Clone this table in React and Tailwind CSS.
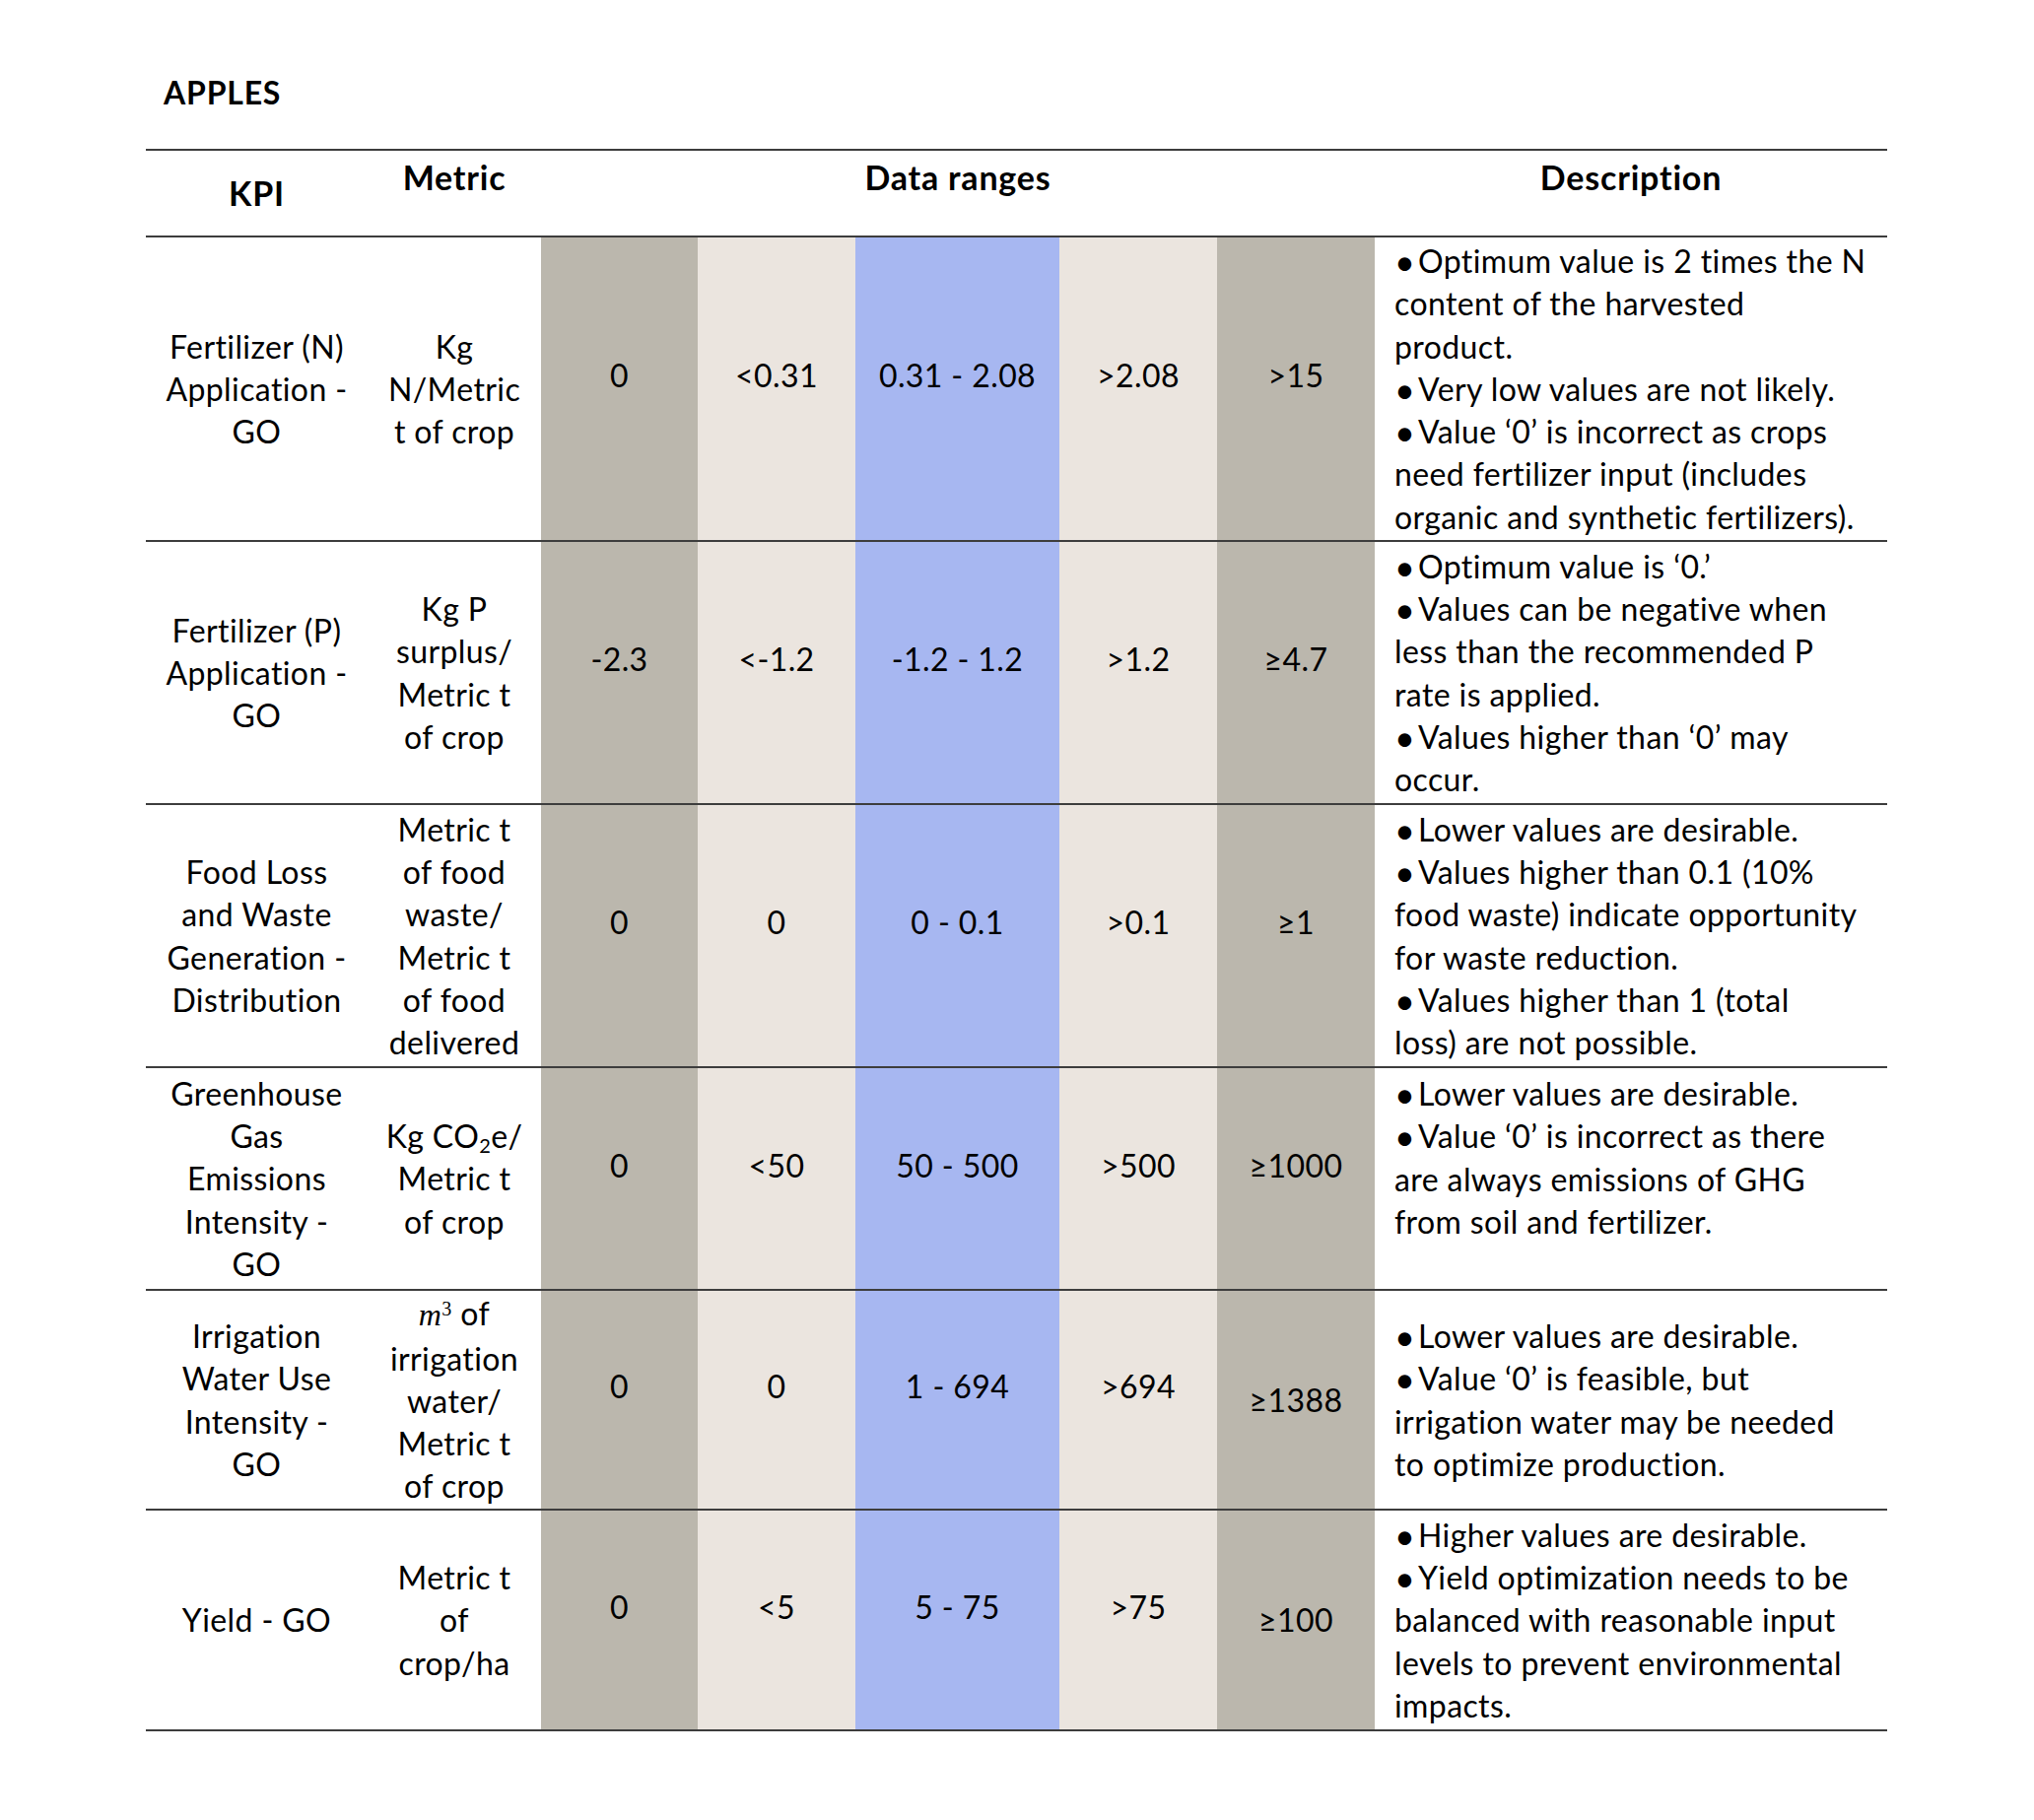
const GRAY = 'bg-[#bbb7ad]'
const LIGHT = 'bg-[#ebe5df]'
const BLUE = 'bg-[#a7b7f1]'
const bands = [GRAY, LIGHT, BLUE, LIGHT, GRAY]

const cols = 'grid grid-cols-[225px_176px_159px_160px_207px_160px_160px_520px]'

const M3 = (
  <>
    <span className="font-['Liberation_Serif',serif] italic">m</span>
    <sup className="font-['Liberation_Serif',serif] text-[20px]">3</sup> of
  </>
)

const CO2 = (
  <>
    Kg CO<sub className="text-[20px]">2</sub>e/
  </>
)

const rows = [
  {
    h: 'h-[309px]',
    kpi: ['Fertilizer (N)', 'Application -', 'GO'],
    metric: ['Kg', 'N/Metric', 't of crop'],
    vals: ['0', '<0.31', '0.31 - 2.08', '>2.08', '>15'],
    desc: [
      ['Optimum value is 2 times the N'],
      'content of the harvested',
      'product.',
      ['Very low values are not likely.'],
      ['Value ‘0’ is incorrect as crops'],
      'need fertilizer input (includes',
      'organic and synthetic fertilizers).'
    ]
  },
  {
    h: 'h-[267px]',
    kpi: ['Fertilizer (P)', 'Application -', 'GO'],
    metric: ['Kg P', 'surplus/', 'Metric t', 'of crop'],
    vals: ['-2.3', '<-1.2', '-1.2 - 1.2', '>1.2', '≥4.7'],
    desc: [
      ['Optimum value is ‘0.’'],
      ['Values can be negative when'],
      'less than the recommended P',
      'rate is applied.',
      ['Values higher than ‘0’ may'],
      'occur.'
    ]
  },
  {
    h: 'h-[267px]',
    kpi: ['Food Loss', 'and Waste', 'Generation -', 'Distribution'],
    metric: ['Metric t', 'of food', 'waste/', 'Metric t', 'of food', 'delivered'],
    vals: ['0', '0', '0 - 0.1', '>0.1', '≥1'],
    desc: [
      ['Lower values are desirable.'],
      ['Values higher than 0.1 (10%'],
      'food waste) indicate opportunity',
      'for waste reduction.',
      ['Values higher than 1 (total'],
      'loss) are not possible.'
    ]
  },
  {
    h: 'h-[226px]',
    kpi: ['Greenhouse', 'Gas', 'Emissions', 'Intensity -', 'GO'],
    metric: [CO2, 'Metric t', 'of crop'],
    vals: ['0', '<50', '50 - 500', '>500', '≥1000'],
    descTop: true,
    desc: [
      ['Lower values are desirable.'],
      ['Value ‘0’ is incorrect as there'],
      'are always emissions of GHG',
      'from soil and fertilizer.'
    ]
  },
  {
    h: 'h-[223px]',
    kpi: ['Irrigation', 'Water Use', 'Intensity -', 'GO'],
    metric: [M3, 'irrigation', 'water/', 'Metric t', 'of crop'],
    vals: ['0', '0', '1 - 694', '>694', '≥1388'],
    lastCentered: true,
    desc: [
      ['Lower values are desirable.'],
      ['Value ‘0’ is feasible, but'],
      'irrigation water may be needed',
      'to optimize production.'
    ]
  },
  {
    h: 'h-[224px]',
    kpi: ['Yield - GO'],
    metric: ['Metric t', 'of', 'crop/ha'],
    vals: ['0', '<5', '5 - 75', '>75', '≥100'],
    lastCentered: true,
    desc: [
      ['Higher values are desirable.'],
      ['Yield optimization needs to be'],
      'balanced with reasonable input',
      'levels to prevent environmental',
      'impacts.'
    ]
  }
]

function Lines({ items }) {
  return items.map((t, i) => (
    <div key={i} className="whitespace-nowrap">{t}</div>
  ))
}

// bullet lines are given as [text]; others are plain strings
function DescLines({ items }) {
  return items.map((t, i) =>
    Array.isArray(t) ? (
      <div key={i} className="flex whitespace-nowrap">
        <span className="w-[24px] shrink-0 text-[36px] relative top-[1px]">•</span>
        <span>{t[0]}</span>
      </div>
    ) : (
      <div key={i} className="whitespace-nowrap">{t}</div>
    )
  )
}

function Row({ row }) {
  return (
    <div className={`${cols} ${row.h} border-b-2 border-[#3d3d3d]`}>
      <div className="flex flex-col items-center justify-center text-center">
        <Lines items={row.kpi} />
      </div>
      <div className="flex flex-col items-center justify-center text-center">
        <Lines items={row.metric} />
      </div>
      {row.vals.map((v, i) => {
        const centered = row.lastCentered && i === 4
        return (
          <div
            key={i}
            className={`${bands[i]} flex items-center justify-center whitespace-nowrap ${centered ? '' : 'pb-[27px]'}`}
          >
            {v}
          </div>
        )
      })}
      <div className={`flex flex-col pl-[20px] ${row.descTop ? 'justify-start pt-[4px]' : 'justify-center'}`}>
        <DescLines items={row.desc} />
      </div>
    </div>
  )
}

export default function App() {
  return (
    <div className="min-h-screen bg-white text-black font-['Lato',sans-serif] pt-[72px] pl-[148px]">
      <div className="h-[44px] leading-[44px] text-[32px] tracking-[0.8px] font-bold pl-[18px]">APPLES</div>

      <div className="mt-[35px] w-[1767px] border-t-2 border-[#3d3d3d] text-[32px] tracking-[0.4px] leading-[43.3px]">
        {/* Header */}
        <div className={`${cols} h-[88px] border-b-2 border-[#3d3d3d] font-bold text-[34px] tracking-[0.8px]`}>
          <div className="flex items-center justify-center">KPI</div>
          <div className="flex items-center justify-center pb-[32px]">Metric</div>
          <div className="col-span-5 flex items-center justify-center pb-[32px]">Data ranges</div>
          <div className="flex items-center justify-center pb-[32px]">Description</div>
        </div>

        {rows.map((row, i) => (
          <Row key={i} row={row} />
        ))}
      </div>
    </div>
  )
}
